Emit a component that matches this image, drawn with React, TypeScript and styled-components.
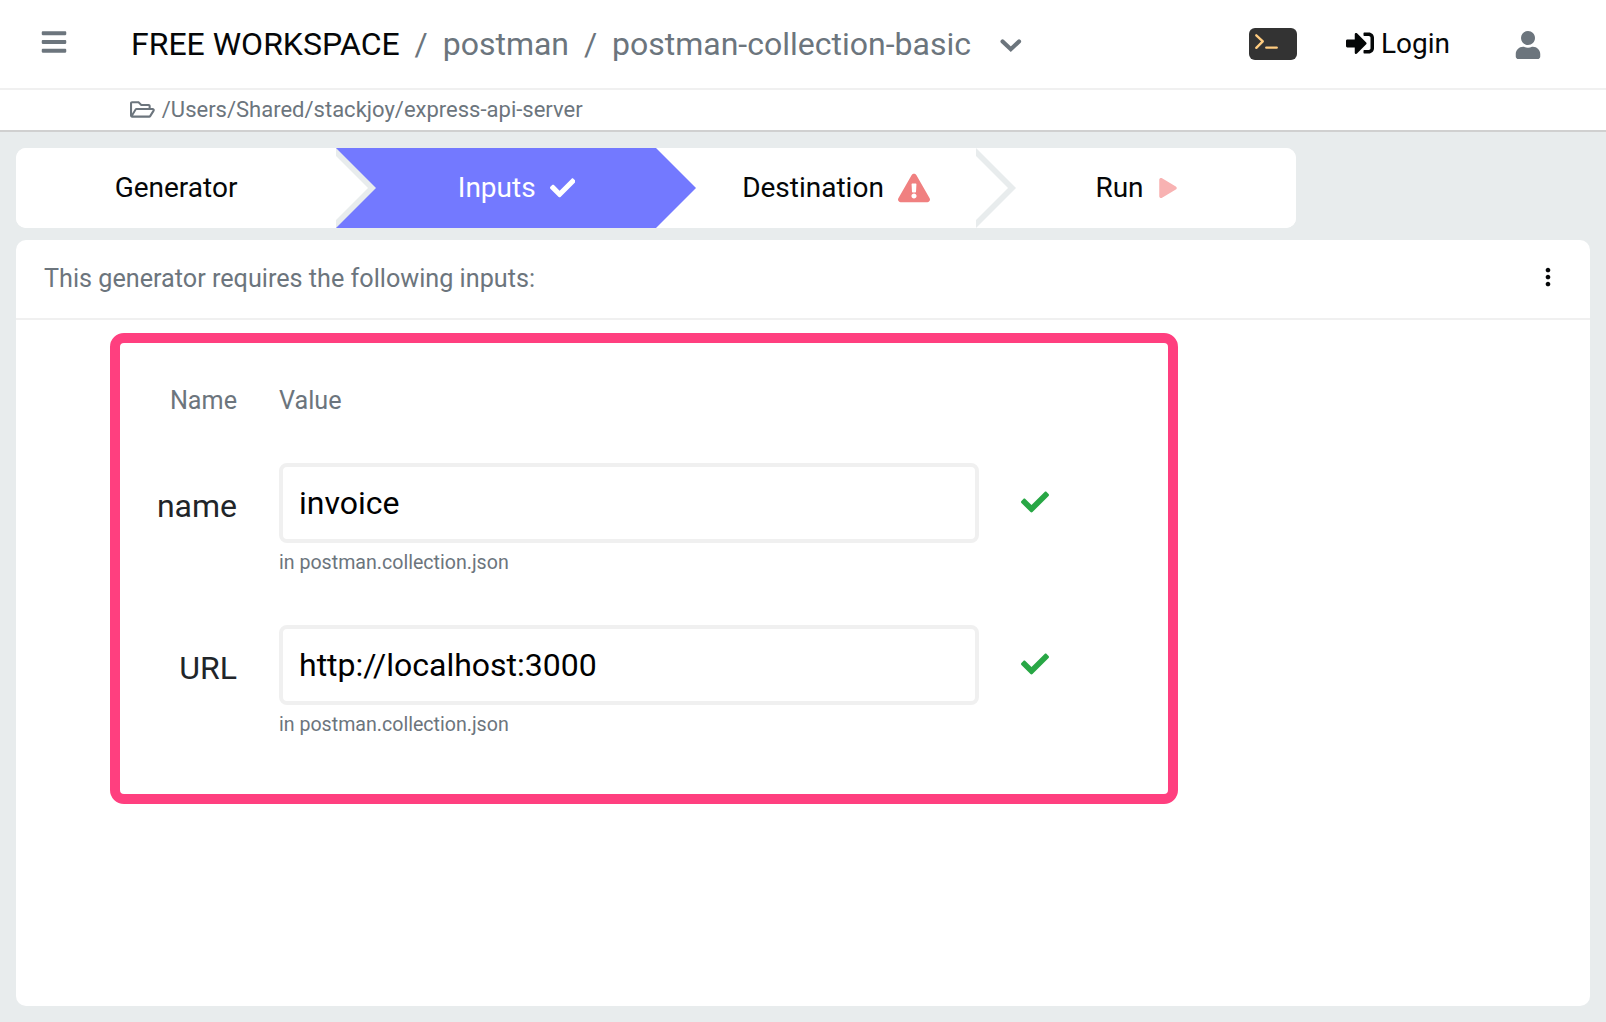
import React from "react";
import styled, { createGlobalStyle } from "styled-components";
import {
  FaBars,
  FaCheck,
  FaExclamationTriangle,
  FaPlay,
  FaRegFolderOpen,
  FaSignInAlt,
  FaUser,
} from "react-icons/fa";
import { MdMoreVert } from "react-icons/md";

const color = {
  page: "#e8eced",
  muted: "#6c757d",
  ink: "#050708",
  label: "#212529",
  accent: "#7379ff",
  line: "#f0f0f0",
  highlight: "#ff3f7f",
  success: "#28a745",
  danger: "#f08080",
};

const GlobalStyle = createGlobalStyle`
  *, *::before, *::after { box-sizing: border-box; }
  body {
    margin: 0;
    background: ${color.page};
    font-family: Roboto, "Liberation Sans", sans-serif;
    color: ${color.ink};
  }
  svg { display: block; flex: none; }
`;

const Page = styled.div`
  display: flex;
  flex-direction: column;
  height: 1022px;
`;

const Header = styled.header`
  display: flex;
  align-items: center;
  height: 90px;
  padding: 0 64px 0 40px;
  background: #fff;
  border-bottom: 2px solid ${color.line};
`;

const MenuButton = styled.button`
  display: flex;
  width: 91px;
  padding: 0 0 4px;
  border: 0;
  background: none;
  color: ${color.muted};
  font-size: 28px;
`;

const Breadcrumb = styled.nav`
  display: flex;
  align-items: center;
  flex: 1;
  padding-bottom: 1px;
  font-size: 32px;
  line-height: 40px;
  color: ${color.muted};
  white-space: nowrap;
`;

const Workspace = styled.span`
  color: ${color.ink};
`;

const Slash = styled.span`
  width: 43px;
  text-align: center;
`;

const ChevronSlot = styled.span`
  padding: 4px 0 0 29px;
`;

const Terminal = styled.button`
  width: 48px;
  height: 32px;
  padding: 0;
  border: 0;
  border-radius: 6px;
  background: #333;
`;

const Login = styled.a`
  display: flex;
  align-items: center;
  gap: 7px;
  margin-left: 49px;
  font-size: 28px;
  line-height: 36px;

  svg {
    margin-bottom: 2px;
  }
`;

const Account = styled.span`
  display: flex;
  margin-left: 64px;
  padding-top: 2px;
  color: ${color.muted};
  font-size: 28px;
`;

const PathBar = styled.div`
  display: flex;
  align-items: center;
  gap: 7px;
  height: 42px;
  padding-left: 130px;
  padding-bottom: 2px;
  background: #fff;
  border-bottom: 2px solid #d0d0d0;
  color: ${color.muted};
  font-size: 22px;
`;

const Main = styled.main`
  display: flex;
  flex-direction: column;
  flex: 1;
  gap: 12px;
  padding: 16px;
`;

const Steps = styled.div`
  display: grid;
  grid-template-columns: repeat(4, 320px);
  width: 1280px;
  height: 80px;
  border-radius: 10px;
  background: #fff;
  overflow: hidden;
`;

const Step = styled.div<{ $active?: boolean }>`
  position: relative;
  display: flex;
  align-items: center;
  justify-content: center;
  padding-bottom: 2px;
  font-size: 28px;
  color: ${(p) => (p.$active ? "#fff" : color.ink)};
  background: ${(p) => (p.$active ? color.accent : "#fff")};
`;

/* Triangular tip laid over the start of the following step. */
const Tip = styled.span<{ $fill: string }>`
  position: absolute;
  z-index: 1;
  top: 0;
  left: 100%;
  width: 40px;
  height: 80px;
  background: ${(p) => p.$fill};
  clip-path: polygon(0 0, 100% 50%, 0 100%);

  &::after {
    content: "";
    position: absolute;
    top: 8px;
    left: 0;
    width: 32px;
    height: 64px;
    background: ${(p) => (p.$fill === color.page ? "#fff" : "none")};
    clip-path: polygon(0 0, 100% 50%, 0 100%);
  }
`;

const StepLabel = styled.span<{ $shift?: number }>`
  display: flex;
  align-items: center;
  gap: 14px;
  margin-left: ${(p) => p.$shift ?? 0}px;

  svg {
    margin-top: 1px;
  }
`;

const Card = styled.section`
  flex: 1;
  border-radius: 10px;
  background: #fff;
`;

const CardHeader = styled.div`
  display: flex;
  align-items: center;
  justify-content: space-between;
  height: 80px;
  padding: 0 28px 2px;
  border-bottom: 2px solid ${color.line};
  color: ${color.muted};
  font-size: 25.2px;
`;

const MenuDots = styled.span`
  padding-bottom: 2px;
  color: #050708;
  font-size: 28px;
`;

const Highlight = styled.div`
  width: 1068px;
  height: 471px;
  margin: 13px 0 0 94px;
  padding-top: 43px;
  border: 10px solid ${color.highlight};
  border-radius: 14px;
`;

const FormGrid = styled.div`
  display: grid;
  grid-template-columns: 117px 700px 28px;
  column-gap: 42px;
`;

const ColumnTitle = styled.div<{ $right?: boolean }>`
  height: 77px;
  font-size: 25.2px;
  line-height: 30px;
  color: ${color.muted};
  text-align: ${(p) => (p.$right ? "right" : "left")};
`;

const FieldName = styled.label`
  padding-top: 3px;
  font-size: 32px;
  line-height: 80px;
  color: ${color.label};
  text-align: right;
`;

const Field = styled.div`
  height: 162px;
`;

const Input = styled.input`
  display: block;
  width: 700px;
  height: 80px;
  padding: 0 16px 1px;
  border: 4px solid ${color.line};
  border-radius: 8px;
  background: #fff;
  color: #000;
  font: 32px Roboto, "Liberation Sans", sans-serif;
  outline: none;
`;

const Hint = styled.div`
  padding-top: 8px;
  font-size: 19.6px;
  line-height: 24px;
  color: ${color.muted};
`;

const Valid = styled.div`
  padding-top: 24.5px;
  color: ${color.success};
  font-size: 28px;
`;

const fields = [
  { name: "name", value: "invoice", source: "in postman.collection.json" },
  { name: "URL", value: "http://localhost:3000", source: "in postman.collection.json" },
];

export default function App() {
  return (
    <Page>
      <GlobalStyle />
      <Header>
        <MenuButton aria-label="Menu">
          <FaBars />
        </MenuButton>
        <Breadcrumb>
          <Workspace>FREE WORKSPACE</Workspace>
          <Slash>/</Slash>
          <span>postman</span>
          <Slash>/</Slash>
          <span>postman-collection-basic</span>
          <ChevronSlot>
            <svg width="22" height="14" fill="none" stroke="currentColor" strokeWidth="4.2" strokeLinecap="round">
              <path d="M2.6 2.5 L10.8 10.2 L19 2.5" />
            </svg>
          </ChevronSlot>
        </Breadcrumb>
        <Terminal aria-label="Terminal">
          <svg width="48" height="32" fill="none" stroke="#ffcc80" strokeWidth="2.4" strokeLinecap="round">
            <path d="M7.3 7.3 L13.8 13.3 L7.3 19.8" strokeLinejoin="round" />
            <path d="M17.3 19.6 H27.7" />
          </svg>
        </Terminal>
        <Login>
          <FaSignInAlt />
          Login
        </Login>
        <Account>
          <FaUser />
        </Account>
      </Header>
      <PathBar>
        <FaRegFolderOpen size={24.8} />
        /Users/Shared/stackjoy/express-api-server
      </PathBar>
      <Main>
        <Steps>
          <Step>
            <StepLabel>Generator</StepLabel>
            <Tip $fill={color.page} />
          </Step>
          <Step $active>
            <StepLabel $shift={41}>
              Inputs <FaCheck size={25.6} />
            </StepLabel>
            <Tip $fill={color.accent} />
          </Step>
          <Step>
            <StepLabel $shift={40}>
              Destination <FaExclamationTriangle size={32} color={color.danger} />
            </StepLabel>
            <Tip $fill={color.page} />
          </Step>
          <Step>
            <StepLabel $shift={1}>
              Run <FaPlay size={20} color="#f8b2b2" />
            </StepLabel>
          </Step>
        </Steps>
        <Card>
          <CardHeader>
            This generator requires the following inputs:
            <MenuDots>
              <MdMoreVert />
            </MenuDots>
          </CardHeader>
          <Highlight>
            <FormGrid>
              <ColumnTitle $right>Name</ColumnTitle>
              <ColumnTitle>Value</ColumnTitle>
              <ColumnTitle />
              {fields.map((f) => (
                <React.Fragment key={f.name}>
                  <FieldName htmlFor={f.name}>{f.name}</FieldName>
                  <Field>
                    <Input id={f.name} defaultValue={f.value} />
                    <Hint>{f.source}</Hint>
                  </Field>
                  <Valid>
                    <FaCheck />
                  </Valid>
                </React.Fragment>
              ))}
            </FormGrid>
          </Highlight>
        </Card>
      </Main>
    </Page>
  );
}
